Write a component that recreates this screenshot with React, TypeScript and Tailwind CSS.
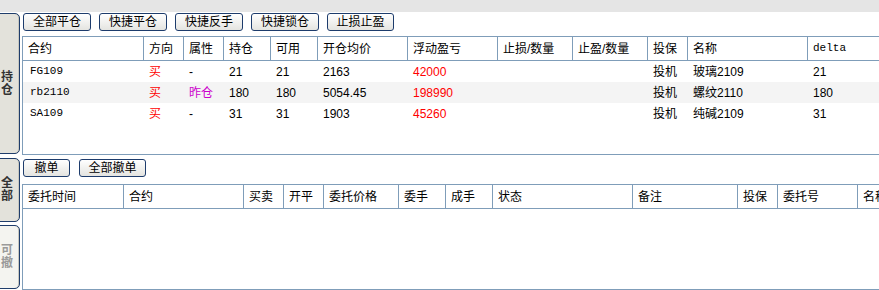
import React from 'react';

const FONT = "font-['Liberation_Sans','Noto_Sans_CJK_SC',sans-serif]";
const MONO = "font-['Liberation_Mono','Noto_Sans_CJK_SC',monospace] text-[11px]";

interface Col {
  title: string;
  w: string;
  mono?: boolean;
}

const posCols: Col[] = [
  { title: '合约', w: 'w-[121px]' },
  { title: '方向', w: 'w-[40px]' },
  { title: '属性', w: 'w-[40px]' },
  { title: '持仓', w: 'w-[47px]' },
  { title: '可用', w: 'w-[47px]' },
  { title: '开仓均价', w: 'w-[90px]' },
  { title: '浮动盈亏', w: 'w-[90px]' },
  { title: '止损/数量', w: 'w-[75px]' },
  { title: '止盈/数量', w: 'w-[75px]' },
  { title: '投保', w: 'w-[40px]' },
  { title: '名称', w: 'w-[120px]' },
  { title: 'delta', w: 'w-[120px]', mono: true },
];

const orderCols: Col[] = [
  { title: '委托时间', w: 'w-[101px]' },
  { title: '合约', w: 'w-[120px]' },
  { title: '买卖', w: 'w-[40px]' },
  { title: '开平', w: 'w-[40px]' },
  { title: '委托价格', w: 'w-[75px]' },
  { title: '委手', w: 'w-[47px]' },
  { title: '成手', w: 'w-[47px]' },
  { title: '状态', w: 'w-[140px]' },
  { title: '备注', w: 'w-[105px]' },
  { title: '投保', w: 'w-[40px]' },
  { title: '委托号', w: 'w-[80px]' },
  { title: '名称', w: 'w-[120px]' },
];

const positions = [
  { code: 'FG109', attr: '-', hold: '21', avail: '21', price: '2163', pnl: '42000', name: '玻璃2109', delta: '21' },
  { code: 'rb2110', attr: '昨仓', hold: '180', avail: '180', price: '5054.45', pnl: '198990', name: '螺纹2110', delta: '180' },
  { code: 'SA109', attr: '-', hold: '31', avail: '31', price: '1903', pnl: '45260', name: '纯碱2109', delta: '31' },
];

const Btn: React.FC<{ label: string; w: string }> = ({ label, w }) => (
  <button
    className={`${w} h-[18px] shrink-0 rounded-[3px] border border-[#1d3c6c] bg-linear-to-b from-white to-[#e4e4e0] text-[12px] leading-none text-black`}
  >
    {label}
  </button>
);

const HeaderRow: React.FC<{ cols: Col[] }> = ({ cols }) => (
  <div className="flex h-[24px] shrink-0 border-b border-[#7f9db9]">
    {cols.map((c, i) => (
      <div
        key={i}
        className={`${c.w} shrink-0 flex items-center pl-[5px] ${i < cols.length - 1 ? 'border-r border-[#7f9db9]' : ''} ${
          c.mono ? MONO : 'text-[12px]'
        }`}
      >
        {c.title}
      </div>
    ))}
  </div>
);

const SideTab: React.FC<{ label: [string, string]; h: string; muted?: boolean }> = ({ label, h, muted }) => (
  <div
    className={`${h} w-[26px] -ml-[6px] shrink-0 flex flex-col items-center justify-center rounded-r-[5px] border border-[#1f3d6b] shadow-[inset_-1px_0_0_#c8c8c0] text-[12px] font-bold leading-[13px] ${
      muted ? 'bg-[#f4f4f0] text-[#9a9a9a]' : 'bg-[#e3e2db] text-[#333]'
    }`}
  >
    <span>{label[0]}</span>
    <span>{label[1]}</span>
  </div>
);

export default function App() {
  return (
    <div className={`w-[879px] h-[290px] overflow-hidden bg-white text-black ${FONT}`}>
      <div className="h-[12px] bg-[#e5e5e5]" />
      <div className="flex h-[278px]">
        {/* left tabs */}
        <div className="w-[22px] shrink-0 flex flex-col pt-[1px]">
          <SideTab label={['持', '仓']} h="h-[141px]" />
          <div className="h-[4px]" />
          <SideTab label={['全', '部']} h="h-[64px]" />
          <div className="h-[3px]" />
          <SideTab label={['可', '撤']} h="h-[64px]" muted />
        </div>

        <div className="flex-1 min-w-0 flex flex-col">
          {/* positions */}
          <div className="flex gap-[8px] pl-[1px] pt-[1px]">
            <Btn label="全部平仓" w="w-[68px]" />
            <Btn label="快捷平仓" w="w-[68px]" />
            <Btn label="快捷反手" w="w-[68px]" />
            <Btn label="快捷锁仓" w="w-[68px]" />
            <Btn label="止损止盈" w="w-[67px]" />
          </div>
          <div className="mt-[5px] h-[119px] border-l border-t border-b border-[#7f9db9] flex flex-col">
            <HeaderRow cols={posCols} />
            {positions.map((p, r) => (
              <div key={p.code} className={`flex h-[21px] items-center text-[12px] ${r === 1 ? 'bg-[#f4f4f4]' : ''}`}>
                <div className={`w-[121px] shrink-0 pl-[7px] ${MONO}`}>{p.code}</div>
                <div className="w-[40px] shrink-0 pl-[5px] text-[#ff0000]">买</div>
                <div className={`w-[40px] shrink-0 pl-[5px] ${p.attr === '昨仓' ? 'text-[#cc00cc]' : ''}`}>{p.attr}</div>
                <div className="w-[47px] shrink-0 pl-[5px]">{p.hold}</div>
                <div className="w-[47px] shrink-0 pl-[5px]">{p.avail}</div>
                <div className="w-[90px] shrink-0 pl-[5px]">{p.price}</div>
                <div className="w-[90px] shrink-0 pl-[5px] text-[#ff0000]">{p.pnl}</div>
                <div className="w-[75px] shrink-0" />
                <div className="w-[75px] shrink-0" />
                <div className="w-[40px] shrink-0 pl-[5px]">投机</div>
                <div className="w-[120px] shrink-0 pl-[5px]">{p.name}</div>
                <div className="w-[120px] shrink-0 pl-[5px]">{p.delta}</div>
              </div>
            ))}
          </div>

          {/* orders */}
          <div className="flex gap-[9px] pl-[1px] mt-[4px]">
            <Btn label="撤单" w="w-[47px]" />
            <Btn label="全部撤单" w="w-[67px]" />
          </div>
          <div className="mt-[7px] flex-1 border-l border-t border-b border-[#7f9db9] flex flex-col">
            <HeaderRow cols={orderCols} />
          </div>
        </div>
      </div>
    </div>
  );
}
